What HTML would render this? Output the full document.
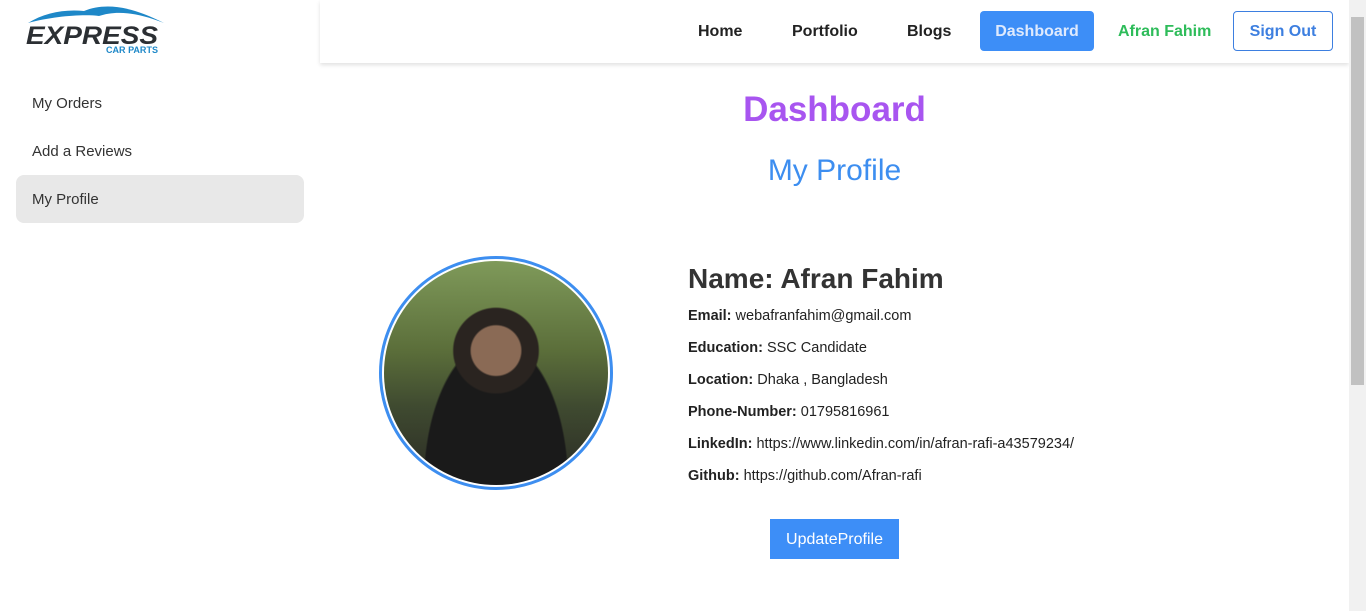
<!DOCTYPE html>
<html><head><style>
*{margin:0;padding:0;box-sizing:border-box}
body{width:1366px;height:611px;overflow:hidden;background:#fff;font-family:"Liberation Sans",sans-serif;color:#222;position:relative}
.sb{position:absolute;right:0;top:0;width:17px;height:611px;background:#f1f1f1}
.sb .th{position:absolute;left:2px;top:17px;width:13px;height:368px;background:#c1c1c1}
.hdr{position:absolute;left:320px;top:0;width:1029px;height:63px;box-shadow:0 2px 4px rgba(0,0,0,.12);background:#fff}
.nav{position:absolute;top:11px;height:40px;font-weight:bold;font-size:16px;line-height:41px}
.side a{position:absolute;left:16px;width:288px;height:48px;line-height:50px;padding-left:16px;font-size:15px;color:#333;border-radius:8px}
p.i{font-size:14.5px;margin-bottom:13px;line-height:19px;color:#222}
</style></head><body>
<svg style="position:absolute;left:24px;top:3px" width="145" height="52" viewBox="0 0 145 52">
<path d="M4 20 C20 10,40 6,60 8 C80 0,105 2,140 20 C110 8,90 8,75 13 C60 11,30 13,4 20Z" fill="#1e88c8"/>
<text x="2" y="41" font-family="Liberation Sans" font-weight="bold" font-style="italic" font-size="25" fill="#2b2f33" textLength="132" lengthAdjust="spacingAndGlyphs">EXPRESS</text>
<text x="82" y="50" font-family="Liberation Sans" font-weight="bold" font-size="9" fill="#1e88c8" textLength="52" lengthAdjust="spacingAndGlyphs">CAR PARTS</text>
</svg>
<div class="hdr"></div>
<div class="nav" style="left:698px">Home</div>
<div class="nav" style="left:792px">Portfolio</div>
<div class="nav" style="left:907px">Blogs</div>
<div class="nav" style="left:980px;width:114px;background:#3d8ef7;color:#dfeafd;border-radius:4px;text-align:center">Dashboard</div>
<div class="nav" style="left:1118px;color:#2ebc5a">Afran Fahim</div>
<div class="nav" style="left:1233px;width:100px;border:1px solid #3d7fe0;color:#3d7fe0;border-radius:4px;text-align:center;line-height:39px">Sign Out</div>
<div class="side">
<a style="top:79px">My Orders</a>
<a style="top:127px">Add a Reviews</a>
<a style="top:175px;background:#e8e8e8">My Profile</a>
</div>
<div style="position:absolute;left:320px;width:1029px;top:90px;text-align:center;font-size:35px;font-weight:bold;color:#a855f0">Dashboard</div>
<div style="position:absolute;left:320px;width:1029px;top:154px;text-align:center;font-size:30px;color:#3d8ef0">My Profile</div>
<div style="position:absolute;left:379px;top:256px;width:234px;height:234px;border-radius:50%;border:3px solid #3d8ef0;padding:2px;background:#fff">
<div style="width:100%;height:100%;border-radius:50%;background:radial-gradient(circle at 50% 40%,#8a6a55 0 14%,#2a2420 15% 24%,transparent 25%),radial-gradient(ellipse at 50% 100%,#1a1a1a 0 45%,transparent 46%),linear-gradient(180deg,#7f9a5a 0%,#5b6e3a 40%,#3f4a30 65%,#2a2a24 100%)"></div></div>
<div style="position:absolute;left:688px;top:261px">
<div style="font-size:28px;font-weight:bold;color:#333;margin-bottom:10px;line-height:36px">Name: Afran Fahim</div>
<p class="i"><b>Email:</b> webafranfahim@gmail.com</p>
<p class="i"><b>Education:</b> SSC Candidate</p>
<p class="i"><b>Location:</b> Dhaka , Bangladesh</p>
<p class="i"><b>Phone-Number:</b> 01795816961</p>
<p class="i"><b>LinkedIn:</b> https://www.linkedin.com/in/afran-rafi-a43579234/</p>
<p class="i"><b>Github:</b> https://github.com/Afran-rafi</p>
</div>
<div style="position:absolute;left:770px;top:519px;width:129px;height:40px;background:#3d8ef7;color:#fff;font-size:16px;line-height:41px;text-align:center">UpdateProfile</div>
<div class="sb"><div class="th"></div></div>
</body></html>
